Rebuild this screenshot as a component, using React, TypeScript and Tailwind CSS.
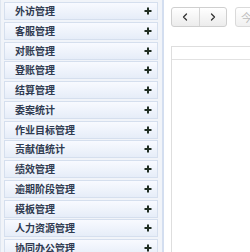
import { ChevronLeft, ChevronRight } from 'lucide-react';

const menus = [
  '外访管理',
  '客服管理',
  '对账管理',
  '登账管理',
  '结算管理',
  '委案统计',
  '作业目标管理',
  '贡献值统计',
  '绩效管理',
  '逾期阶段管理',
  '模板管理',
  '人力资源管理',
  '协同办公管理',
];

function Plus() {
  return (
    <svg width="8" height="8" viewBox="0 0 8 8" className="shrink-0">
      <path d="M4 0.5V7.5M0.5 4H7.5" stroke="#1f2d22" strokeWidth="2" />
    </svg>
  );
}

export default function App() {
  return (
    <div
      className="flex w-[250px] h-[252px] overflow-hidden bg-white"
      style={{ fontFamily: '"Noto Sans CJK SC", "Liberation Sans", sans-serif' }}
    >
      {/* 左侧菜单 */}
      <div className="w-[164px] shrink-0 h-full bg-[#f1f4f9] border-l border-[#dfe6f0] border-r-2 border-r-[#d3def0] pl-[3px] pr-[4px] pt-[2px] flex flex-col gap-[1.75px]">
        {menus.map((m) => (
          <div
            key={m}
            className="h-[18px] shrink-0 flex items-center justify-between pl-[10px] pr-[5px] border border-[#d5dfee] bg-gradient-to-b from-[#f8faff] to-[#e6edf8]"
          >
            <span className="text-[10px] leading-none font-bold text-[#2f3a50]">{m}</span>
            <Plus />
          </div>
        ))}
      </div>

      {/* 右侧内容 */}
      <div className="flex-1 pl-[7px] pt-[7px] flex flex-col">
        <div className="flex items-start gap-[8px]">
          <div className="flex h-[20px] w-[56px] rounded-[3px] border border-[#cfcfcf] bg-gradient-to-b from-white to-[#ececec] shrink-0">
            <div className="flex-1 flex items-center justify-center border-r border-[#d5d5d5]">
              <ChevronLeft size={12} strokeWidth={2.5} color="#333" />
            </div>
            <div className="flex-1 flex items-center justify-center">
              <ChevronRight size={12} strokeWidth={2.5} color="#333" />
            </div>
          </div>
          <div className="h-[20px] w-[30px] rounded-[3px] border border-[#dadada] bg-gradient-to-b from-white to-[#f0f0f0] shrink-0 flex items-center pl-[5px]">
            <span className="text-[11px] leading-none text-[#bbbbbb]">今</span>
          </div>
        </div>
        <div className="mt-[19px] flex-1 border-l border-t border-[#dedede] w-[100px]">
          <div className="h-[13px] border-b border-[#e2e2e2]" />
        </div>
      </div>
    </div>
  );
}
